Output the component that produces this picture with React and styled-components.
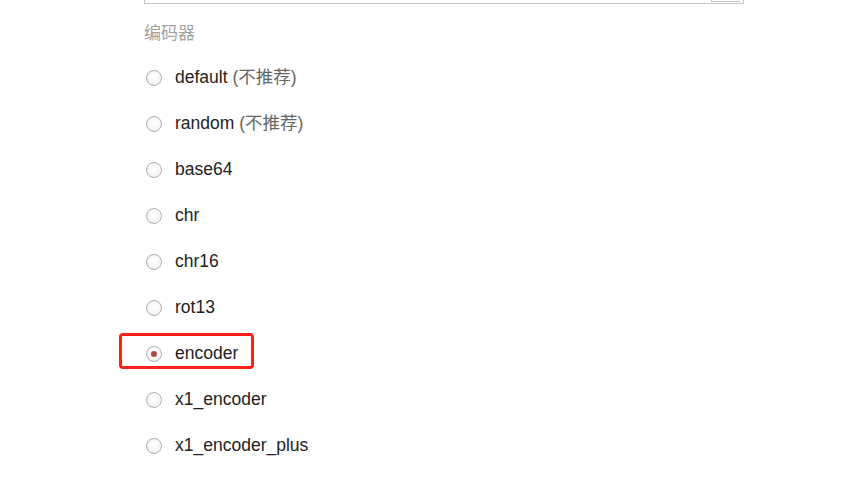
import React from 'react';
import styled, { createGlobalStyle } from 'styled-components';

const GlobalStyle = createGlobalStyle`
  body {
    margin: 0;
    background: #ffffff;
    font-family: "Liberation Sans", "Noto Sans CJK SC", sans-serif;
  }
`;

const Page = styled.div`
  width: 855px;
  height: 479px;
  overflow: hidden;
  padding-left: 144px;
  box-sizing: border-box;
`;

const TextBox = styled.div`
  width: 600px;
  height: 4px;
  border: 1px solid #c4c4c4;
  border-top: none;
  display: flex;
  justify-content: flex-end;
  padding-right: 3px;
  box-sizing: border-box;
`;

const ResizeTab = styled.div`
  width: 29px;
  height: 2px;
  border-bottom: 1px solid #c4c4c4;
  border-left: 1px solid #c4c4c4;
  box-sizing: border-box;
`;

const Title = styled.div`
  height: 50px;
  padding-top: 16px;
  box-sizing: border-box;
  line-height: 24px;
  font-family: "Noto Sans CJK SC", sans-serif;
  font-size: 17px;
  color: #a0a0a0;
`;

const List = styled.div`
  display: flex;
  flex-direction: column;
`;

const Row = styled.label`
  position: relative;
  height: 46px;
  display: flex;
  align-items: center;
  gap: 13px;
  padding-left: 2px;
  font-size: 17.5px;
  line-height: 20px;
  color: #222;
`;

const Radio = styled.span`
  width: 16px;
  height: 16px;
  margin-top: 1px;
  border-radius: 50%;
  border: 1px solid #b0b0b0;
  box-sizing: border-box;
  background: radial-gradient(circle at 50% 40%, #ffffff 0%, #f4f4f4 65%, #e6e6e6 100%);
  display: flex;
  align-items: center;
  justify-content: center;
  &::after {
    content: '';
    width: 6px;
    height: 6px;
    border-radius: 50%;
    background: ${p => (p.checked ? '#a84a4a' : 'transparent')};
  }
`;

const Note = styled.span`
  color: #666;
`;

const Highlight = styled.div`
  position: absolute;
  left: -25px;
  top: 3px;
  width: 135px;
  height: 36px;
  border: 3px solid #ff2018;
  border-radius: 4px;
  box-sizing: border-box;
`;

const options = [
  { name: 'default', note: '(不推荐)' },
  { name: 'random', note: '(不推荐)' },
  { name: 'base64' },
  { name: 'chr' },
  { name: 'chr16' },
  { name: 'rot13' },
  { name: 'encoder', checked: true },
  { name: 'x1_encoder' },
  { name: 'x1_encoder_plus' },
];

export default function App() {
  return (
    <Page>
      <GlobalStyle />
      <TextBox>
        <ResizeTab />
      </TextBox>
      <Title>编码器</Title>
      <List>
        {options.map(o => (
          <Row key={o.name}>
            {o.checked && <Highlight />}
            <Radio checked={o.checked} />
            <span>
              {o.name}
              {o.note && <Note> {o.note}</Note>}
            </span>
          </Row>
        ))}
      </List>
    </Page>
  );
}
